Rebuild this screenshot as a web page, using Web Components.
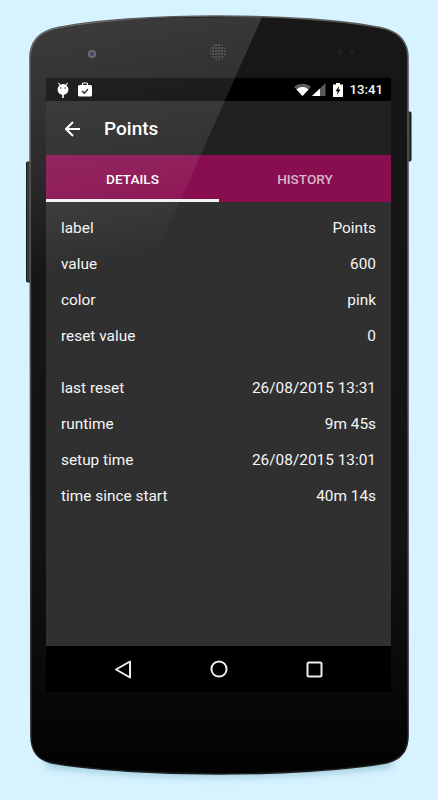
<!DOCTYPE html>
<html lang="en">

<head>
  <meta charset="UTF-8" />
  <meta name="viewport" content="width=device-width" />
  <title>Points</title>
  <style>
    html, body { margin: 0; background: #d6f3ff; }
  </style>

  <script>
    function tpl(html) {
      const t = document.createElement("template");
      t.innerHTML = html;
      return t;
    }

    // phone body, drawn behind the screen, with the glare laid over it
    const frameTpl = tpl(`
      <style>
        :host { display: block; position: relative; width: 438px; height: 800px; box-sizing: border-box; padding: 78px 47px 108px 46px; overflow: hidden; font-family: Roboto, sans-serif; }
        svg.layer { position: absolute; left: 0; top: 0; width: 438px; height: 800px; }
        .screen { position: relative; height: 614px; display: flex; flex-direction: column; background: #303030; }
        .glare { pointer-events: none; }
      </style>
      <svg class="layer" viewBox="0 0 438 800">
        <defs>
          <linearGradient id="body" x1="0" y1="0" x2="0" y2="1">
            <stop offset="0" stop-color="#171717" />
            <stop offset="0.7" stop-color="#131313" />
            <stop offset="1" stop-color="#020202" />
          </linearGradient>
          <linearGradient id="rim" x1="0" y1="0" x2="0" y2="1">
            <stop offset="0" stop-color="#5c5c5c" />
            <stop offset="0.5" stop-color="#4a4a4a" />
            <stop offset="1" stop-color="#1c1c1c" />
          </linearGradient>
          <pattern id="mesh" width="3" height="3" patternUnits="userSpaceOnUse">
            <rect width="3" height="3" fill="#3a3a3a" />
            <circle cx="1.5" cy="1.5" r="1.1" fill="#060606" />
          </pattern>
          <filter id="soft" x="-20%" y="-300%" width="140%" height="700%">
            <feGaussianBlur stdDeviation="4" />
          </filter>
        </defs>
        <path d="M46 758 Q219 782 392 758 L392 766 Q219 786 46 766 Z" fill="#7fb3c8" opacity="0.85" filter="url(#soft)" />
        <rect x="26.5" y="162" width="6" height="120" rx="1" fill="#3a3a3a" stroke="#1a1a1a" />
        <rect x="405" y="112" width="6" height="49" rx="1" fill="#2b2b2b" stroke="#161616" />
        <path d="M30 58 C30 44 36 34 52 29 C90 20 160 16 219 16 C278 16 348 20 386 29 C402 34 408 44 408 58 V736 C408 752 400 760 386 763 C348 770 278 774 219 774 C160 774 90 770 52 763 C38 760 31 752 31 736 Z"
          fill="url(#body)" stroke="url(#rim)" stroke-width="1.6" />
        <circle cx="92" cy="54" r="4" fill="#565656" />
        <circle cx="92" cy="54" r="2" fill="#1c2350" />
        <circle cx="218" cy="52" r="9.5" fill="#111" />
        <circle cx="218" cy="52" r="8.5" fill="url(#mesh)" />
        <circle cx="340" cy="52" r="3" fill="#1f1f1f" />
        <circle cx="352" cy="52" r="2" fill="#222" />
      </svg>
      <div class="screen"><slot></slot></div>
      <svg class="layer glare" viewBox="0 0 438 800">
        <defs>
          <linearGradient id="shine" gradientUnits="userSpaceOnUse" x1="50" y1="20" x2="95" y2="265">
            <stop offset="0" stop-color="#fff" stop-opacity="0.16" />
            <stop offset="0.65" stop-color="#fff" stop-opacity="0.08" />
            <stop offset="1" stop-color="#fff" stop-opacity="0" />
          </linearGradient>
        </defs>
        <path d="M262 17 L155 258 L31 300 V58 C30 44 36 34 52 29 C90 20 160 17 262 17 Z" fill="url(#shine)" />
      </svg>
    `);
    class DeviceFrame extends HTMLElement {
      constructor() {
        super();
        this.attachShadow({ mode: "open" });
        this.shadowRoot.append(frameTpl.content.cloneNode(true));
      }
    }

    const statusTpl = tpl(`
      <style>
        :host { display: flex; align-items: center; height: 23px; flex: none; background: #000; color: #f4f4f4; padding: 0 8px 0 10px; font-size: 13.2px; font-weight: 500; }
        svg { display: block; flex: none; }
        .left { display: flex; align-items: center; gap: 7px; }
        .right { margin-left: auto; display: flex; align-items: center; }
        .time { margin-left: 7px; }
      </style>
      <div class="left">
        <svg width="14" height="16" viewBox="0 0 14 16">
          <path d="M2.5 1 L4.5 3.5 M11.5 1 L9.5 3.5" stroke="#fff" stroke-width="1.2" fill="none" />
          <circle cx="7" cy="7.5" r="5.4" fill="#fff" />
          <circle cx="4.8" cy="6" r="0.8" fill="#222" />
          <circle cx="9.2" cy="6" r="0.8" fill="#222" />
          <rect x="6.2" y="12" width="1.6" height="4" fill="#fff" />
        </svg>
        <svg width="16" height="16" viewBox="0 0 16 16">
          <path d="M5.5 3 V2 a1 1 0 0 1 1 -1 h3 a1 1 0 0 1 1 1 v1" fill="none" stroke="#fff" stroke-width="1.2" />
          <rect x="1" y="3" width="14" height="11.5" rx="1.6" fill="#fff" />
          <path d="M5 9 L7.2 11.2 L11 7.2" fill="none" stroke="#111" stroke-width="1.4" />
        </svg>
      </div>
      <div class="right">
        <svg width="17" height="13" viewBox="0 0 17 13" style="margin-right:1px">
          <path d="M0 3.8 A13 13 0 0 1 17 3.8 L8.5 13 Z" fill="#5a5a5a" />
          <path d="M2.4 6.4 A9 9 0 0 1 14.6 6.4 L8.5 13 Z" fill="#fff" />
        </svg>
        <svg width="14" height="13" viewBox="0 0 14 13" style="margin-right:7px">
          <path d="M13.5 0 V13 H0 Z" fill="#5a5a5a" />
          <path d="M8 5.5 V13 H0 Z" fill="#fff" />
        </svg>
        <svg width="10" height="14" viewBox="0 0 10 14">
          <path d="M3 0 H7 V1.4 H10 V14 H0 V1.4 H3 Z" fill="#fff" />
          <path d="M6 3 L2.6 8.2 H4.6 L4 12 L7.4 6.6 H5.4 Z" fill="#000" />
        </svg>
        <span class="time">13:41</span>
      </div>
    `);
    class StatusBar extends HTMLElement {
      constructor() {
        super();
        this.attachShadow({ mode: "open" });
        this.shadowRoot.append(statusTpl.content.cloneNode(true));
      }
    }

    const appBarTpl = tpl(`
      <style>
        :host { display: flex; align-items: center; height: 54px; box-sizing: border-box; padding-top: 1px; flex: none; background: #212121; color: #fff; font-size: 19px; font-weight: 500; }
        svg { display: block; margin-left: 19px; }
        span { margin-left: 24px; }
      </style>
      <svg width="15" height="16" viewBox="0 0 15 16">
        <path d="M15 8 H1.6 M8 1 L1 8 L8 15" fill="none" stroke="#fff" stroke-width="2" />
      </svg>
      <span><slot></slot></span>
    `);
    class AppBar extends HTMLElement {
      constructor() {
        super();
        this.attachShadow({ mode: "open" });
        this.shadowRoot.append(appBarTpl.content.cloneNode(true));
      }
    }

    const tabsTpl = tpl(`
      <style>
        :host { display: grid; grid-template-columns: 173px 172px; height: 47px; flex: none; background: #880e4f; }
      </style>
      <slot></slot>
    `);
    class TabStrip extends HTMLElement {
      constructor() {
        super();
        this.attachShadow({ mode: "open" });
        this.shadowRoot.append(tabsTpl.content.cloneNode(true));
      }
    }

    const tabTpl = tpl(`
      <style>
        :host { display: flex; align-items: center; justify-content: center; box-sizing: border-box; padding-top: 3px; font-size: 13.6px; font-weight: 500; color: rgba(255,255,255,.7); border-bottom: 3px solid transparent; }
        :host([active]) { color: #fff; border-bottom-color: #f2f2f2; }
      </style>
      <slot></slot>
    `);
    class TabItem extends HTMLElement {
      constructor() {
        super();
        this.attachShadow({ mode: "open" });
        this.shadowRoot.append(tabTpl.content.cloneNode(true));
      }
    }

    const listTpl = tpl(`
      <style>
        :host { display: block; flex: 1; padding: 8px 15px 0 15px; background: #303030; }
        ::slotted(.gap) { display: block; height: 16px; }
      </style>
      <slot></slot>
    `);
    class DetailList extends HTMLElement {
      constructor() {
        super();
        this.attachShadow({ mode: "open" });
        this.shadowRoot.append(listTpl.content.cloneNode(true));
      }
    }

    const rowTpl = tpl(`
      <style>
        :host { display: flex; justify-content: space-between; align-items: center; height: 36px; font-size: 15.4px; color: #f6f6f6; }
      </style>
      <span id="k"></span><span id="v"></span>
    `);
    class DetailRow extends HTMLElement {
      constructor() {
        super();
        this.attachShadow({ mode: "open" });
        this.shadowRoot.append(rowTpl.content.cloneNode(true));
      }
      connectedCallback() {
        this.shadowRoot.getElementById("k").textContent = this.getAttribute("label");
        this.shadowRoot.getElementById("v").textContent = this.getAttribute("value");
      }
    }

    const navTpl = tpl(`
      <style>
        :host { display: grid; grid-template-columns: 96px 96px 96px; justify-content: center; height: 46px; flex: none; background: #000; }
        div { display: flex; align-items: center; justify-content: center; }
        svg { display: block; }
      </style>
      <div><svg width="18" height="19" viewBox="0 0 18 19"><path d="M16 1.5 V17.5 L2 9.5 Z" fill="none" stroke="#eee" stroke-width="2" stroke-linejoin="round" /></svg></div>
      <div><svg width="18" height="18" viewBox="0 0 18 18"><circle cx="9" cy="9" r="7.6" fill="none" stroke="#eee" stroke-width="2" /></svg></div>
      <div><svg width="17" height="17" viewBox="0 0 17 17"><rect x="1.5" y="1.5" width="14" height="14" rx="1.5" fill="none" stroke="#eee" stroke-width="2" /></svg></div>
    `);
    class NavBar extends HTMLElement {
      constructor() {
        super();
        this.attachShadow({ mode: "open" });
        this.shadowRoot.append(navTpl.content.cloneNode(true));
      }
    }

    customElements.define("device-frame", DeviceFrame);
    customElements.define("status-bar", StatusBar);
    customElements.define("app-bar", AppBar);
    customElements.define("tab-strip", TabStrip);
    customElements.define("tab-item", TabItem);
    customElements.define("detail-list", DetailList);
    customElements.define("detail-row", DetailRow);
    customElements.define("nav-bar", NavBar);
  </script>
</head>

<body>
  <device-frame>
    <status-bar></status-bar>
    <app-bar>Points</app-bar>
    <tab-strip>
      <tab-item active>DETAILS</tab-item>
      <tab-item>HISTORY</tab-item>
    </tab-strip>
    <detail-list>
      <detail-row label="label" value="Points"></detail-row>
      <detail-row label="value" value="600"></detail-row>
      <detail-row label="color" value="pink"></detail-row>
      <detail-row label="reset value" value="0"></detail-row>
      <span class="gap"></span>
      <detail-row label="last reset" value="26/08/2015 13:31"></detail-row>
      <detail-row label="runtime" value="9m 45s"></detail-row>
      <detail-row label="setup time" value="26/08/2015 13:01"></detail-row>
      <detail-row label="time since start" value="40m 14s"></detail-row>
    </detail-list>
    <nav-bar></nav-bar>
  </device-frame>
</body>

</html>
